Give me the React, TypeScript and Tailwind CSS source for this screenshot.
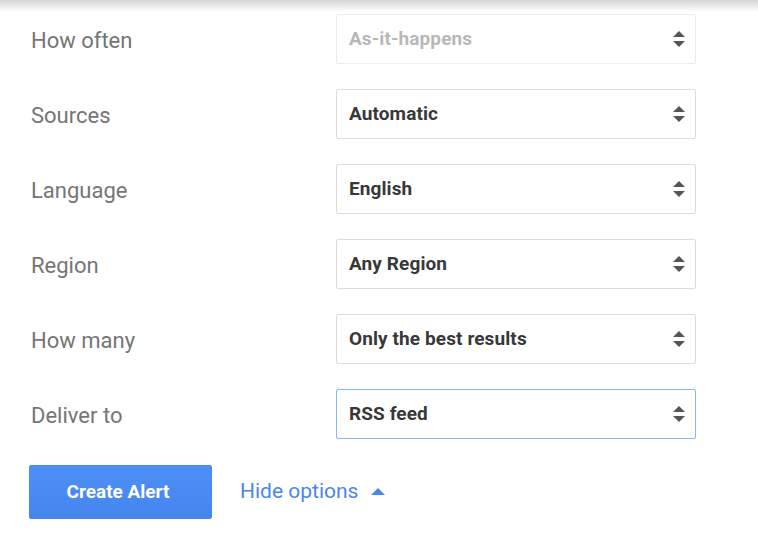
import React from "react";

const rows: { label: string; value: string; disabled?: boolean; focused?: boolean }[] = [
  { label: "How often", value: "As-it-happens", disabled: true },
  { label: "Sources", value: "Automatic" },
  { label: "Language", value: "English" },
  { label: "Region", value: "Any Region" },
  { label: "How many", value: "Only the best results" },
  { label: "Deliver to", value: "RSS feed", focused: true },
];

function Arrows({ color }: { color: string }) {
  return (
    <svg width="14" height="20" viewBox="0 0 14 20" className="shrink-0">
      <path d="M7 2 L13 8 L1 8 Z" fill={color} />
      <path d="M1 12 L13 12 L7 18 Z" fill={color} />
    </svg>
  );
}

export default function App() {
  return (
    <div className="relative w-[758px] h-[543px] bg-white overflow-hidden" style={{ fontFamily: "Roboto, 'Liberation Sans', sans-serif" }}>
      <div className="absolute top-0 left-0 right-0 h-[12px] bg-gradient-to-b from-[#d6d6d6] to-white" />
      <div className="relative flex flex-col gap-[25px] pt-[14px] pl-[31px]">
        {rows.map((r) => (
          <div key={r.label} className="flex items-center h-[50px]">
            <div className="w-[305px] pt-[4px] text-[22px] text-[#757575] leading-none">{r.label}</div>
            <div
              className={
                "flex items-center justify-between w-[360px] h-[50px] rounded-[2px] pl-[12px] pr-[9px] border " +
                (r.disabled
                  ? "border-[#ececec] text-[#b8b8b8]"
                  : r.focused
                  ? "border-[#8ab4f8] text-[#383838]"
                  : "border-[#dcdcdc] text-[#383838]")
              }
            >
              <span className="text-[19px] font-bold leading-none tracking-[0.1px] pb-[2px]">{r.value}</span>
              <Arrows color="#555555" />
            </div>
          </div>
        ))}
        <div className="flex items-center mt-[1px] -ml-[2px]">
          <button className="w-[183px] h-[54px] rounded-[2px] border border-[#4a86ed] bg-gradient-to-b from-[#4d8ff8] to-[#4685ee] text-white text-[19px] font-bold pr-[5px]">
            Create Alert
          </button>
          <div className="flex items-center ml-[28px] text-[21px] text-[#4a86ed]">
            <span>Hide options</span>
            <svg width="14" height="8" viewBox="0 0 14 8" className="ml-[13px]">
              <path d="M7 0 L14 7 L0 7 Z" fill="#4a86ed" />
            </svg>
          </div>
        </div>
      </div>
    </div>
  );
}
